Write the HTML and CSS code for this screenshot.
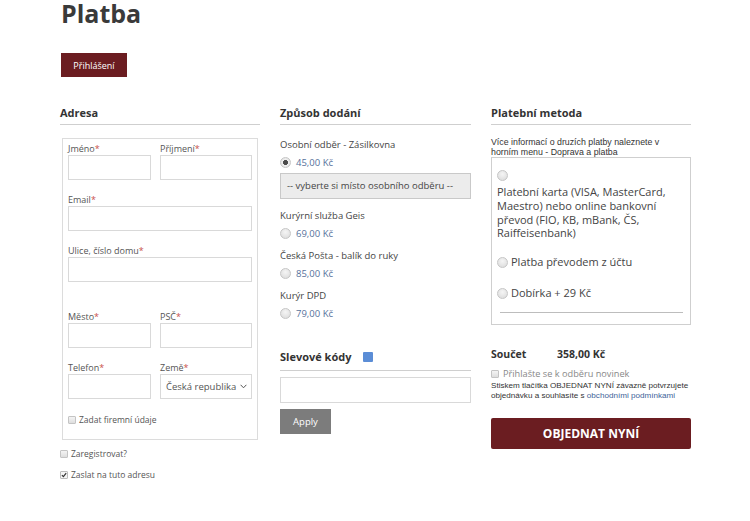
FILE: index.html
```html
<!DOCTYPE html>
<html lang="cs">
<head>
<meta charset="utf-8">
<title>Platba</title>
<link rel="stylesheet" href="styles.css">
</head>
<body>
<div class="page">
  <h1 class="title">Platba</h1>
  <button class="login-btn" type="button">Přihlášení</button>

  <div class="columns">
    <section class="col">
      <h2 class="col-heading">Adresa</h2>
      <div class="address-box">
        <div class="row-split">
          <div class="field field-left"><label class="lbl">Jméno<span class="req">*</span></label><input class="txt" type="text"></div>
          <div class="field field-right"><label class="lbl">Příjmení<span class="req">*</span></label><input class="txt" type="text"></div>
        </div>
        <div class="field"><label class="lbl">Email<span class="req">*</span></label><input class="txt" type="text"></div>
        <div class="field"><label class="lbl">Ulice, číslo domu<span class="req">*</span></label><input class="txt" type="text"></div>
        <div class="row-split row-gap">
          <div class="field field-left"><label class="lbl">Město<span class="req">*</span></label><input class="txt" type="text"></div>
          <div class="field field-right"><label class="lbl">PSČ<span class="req">*</span></label><input class="txt" type="text"></div>
        </div>
        <div class="row-split">
          <div class="field field-left"><label class="lbl">Telefon<span class="req">*</span></label><input class="txt" type="text"></div>
          <div class="field field-right"><label class="lbl">Země<span class="req">*</span></label>
            <div class="country">Česká republika
              <svg class="chev" width="7" height="5" viewBox="0 0 7 5"><path d="M0.6 0.8 L3.5 3.8 L6.4 0.8" fill="none" stroke="#555" stroke-width="1"/></svg>
            </div>
          </div>
        </div>
        <div class="check-row check-in"><span class="cbox"></span>Zadat firemní údaje</div>
      </div>
      <div class="check-row check-out"><span class="cbox"></span>Zaregistrovat?</div>
      <div class="check-row check-out"><span class="cbox cbox-on"><svg width="8" height="8" viewBox="0 0 8 8"><path d="M1.2 4.2 L3.2 6.2 L6.9 1.6" fill="none" stroke="#333" stroke-width="1.6"/></svg></span>Zaslat na tuto adresu</div>
    </section>

    <section class="col">
      <h2 class="col-heading">Způsob dodání</h2>
      <div class="ship-group ship-first">
        <div class="ship-name">Osobní odběr - Zásilkovna</div>
        <div class="ship-price"><span class="radio radio-on"></span>45,00 Kč</div>
        <div class="pickup">-- vyberte si místo osobního odběru --</div>
      </div>
      <div class="ship-group">
        <div class="ship-name">Kurýrní služba Geis</div>
        <div class="ship-price"><span class="radio"></span>69,00 Kč</div>
      </div>
      <div class="ship-group">
        <div class="ship-name">Česká Pošta - balík do ruky</div>
        <div class="ship-price"><span class="radio"></span>85,00 Kč</div>
      </div>
      <div class="ship-group">
        <div class="ship-name">Kurýr DPD</div>
        <div class="ship-price"><span class="radio"></span>79,00 Kč</div>
      </div>

      <h2 class="col-heading coupon-heading">Slevové kódy <span class="info-sq"></span></h2>
      <input class="txt coupon-input" type="text">
      <button class="apply-btn" type="button">Apply</button>
    </section>

    <section class="col">
      <h2 class="col-heading">Platební metoda</h2>
      <p class="pay-info">Více informací o druzích platby naleznete v horním menu - Doprava a platba</p>
      <div class="pay-box">
        <div class="pay-opt pay-card">
          <span class="radio radio-block"></span>
          <div class="pay-text">Platební karta (VISA, MasterCard, Maestro) nebo online bankovní převod (FIO, KB, mBank, ČS, Raiffeisenbank)</div>
        </div>
        <div class="pay-opt pay-line"><span class="radio"></span>Platba převodem z účtu</div>
        <div class="pay-opt pay-line"><span class="radio"></span>Dobírka + 29 Kč</div>
        <div class="pay-rule"></div>
      </div>
      <div class="total"><span class="total-label">Součet</span><span class="total-val">358,00 Kč</span></div>
      <div class="check-row news"><span class="cbox"></span>Přihlašte se k odběru novinek</div>
      <p class="terms">Stiskem tlačítka OBJEDNAT NYNÍ závazně potvrzujete objednávku a souhlasíte s <a class="terms-link" href="#">obchodními podmínkami</a></p>
      <button class="order-btn" type="button">OBJEDNAT NYNÍ</button>
    </section>
  </div>
</div>
</body>
</html>
```

FILE: styles.css
```css
* { box-sizing: border-box; }

body {
  margin: 0;
  background: #fff;
  font-family: "Open Sans", "Liberation Sans", sans-serif;
  color: #444;
}

.page {
  padding-left: 61px;
  width: 700px;
}

.title {
  margin: 0;
  font-size: 25px;
  line-height: 26px;
  font-weight: 700;
  color: #3a3a3a;
}

.login-btn {
  display: block;
  margin-top: 27px;
  width: 66px;
  height: 24px;
  border: 0;
  padding: 0;
  background: #6b1d21;
  color: #fff;
  font-family: "Open Sans", sans-serif;
  font-size: 9px;
}

.columns {
  display: grid;
  grid-template-columns: 200px 191px 200px;
  column-gap: 20px;
  margin-top: 29px;
  margin-left: -1px;
}

.col-heading {
  margin: 0;
  font-size: 11px;
  line-height: 14px;
  font-weight: 700;
  color: #333;
  padding-bottom: 4px;
  border-bottom: 1px solid #cfcfcf;
}

/* address */
.address-box {
  margin: 13px 2px 0 2px;
  border: 1px solid #dcdcdc;
  padding: 3px 5px 12px 5px;
}

.row-split {
  display: flex;
  justify-content: space-between;
}

.row-gap { margin-top: 28px; }

.field { margin-bottom: 13px; }
.field-left { width: 45%; }
.field-right { width: 50%; }

.lbl {
  display: block;
  font-size: 9px;
  line-height: 13px;
  color: #555;
}

.req { color: #c9504a; }

.txt {
  display: block;
  width: 100%;
  height: 25px;
  border: 1px solid #d9d9d9;
  background: #fff;
  margin: 0;
  padding: 0 4px;
}

.country {
  display: flex;
  align-items: center;
  justify-content: space-between;
  height: 25px;
  border: 1px solid #d9d9d9;
  padding: 0 4px 0 5px;
  font-size: 9.5px;
  color: #555;
}

.check-row {
  display: flex;
  align-items: center;
  font-size: 8.5px;
  line-height: 14px;
  color: #555;
}

.check-in { margin-top: 1px; }
.check-out { margin-top: 7px; }

.cbox {
  display: inline-flex;
  align-items: center;
  justify-content: center;
  width: 8px;
  height: 8px;
  border: 1px solid #c4c4c4;
  border-radius: 1px;
  background: linear-gradient(#f4f4f4, #dedede);
  margin-right: 3px;
}

.cbox-on { background: #f4f4f4; border-color: #bbb; }

/* shipping */
.ship-group { margin-top: 5px; }
.ship-first { margin-top: 13px; }

.ship-name {
  font-size: 9.5px;
  line-height: 14px;
  color: #444;
}

.ship-price {
  display: flex;
  align-items: center;
  height: 21px;
  font-size: 9.5px;
  color: #56719b;
}

.radio {
  display: inline-block;
  width: 11px;
  height: 11px;
  border-radius: 50%;
  border: 1px solid #c6c6c6;
  background: radial-gradient(circle at 50% 35%, #f5f5f5, #d9d9d9);
  margin-right: 5px;
  flex: none;
}

.radio-block { display: block; }

.radio-on {
  background: radial-gradient(circle, #4a4a4a 0, #4a4a4a 2.2px, #f0f0f0 2.8px, #dadada 100%);
}

.pickup {
  margin-top: 0;
  margin-bottom: 10px;
  height: 26px;
  border: 1px solid #c9c9c9;
  background: #ececec;
  font-size: 9.5px;
  line-height: 24px;
  padding-left: 6px;
  color: #444;
}

.coupon-heading {
  margin-top: 26px;
  padding-bottom: 6px;
  display: flex;
  align-items: center;
}

.info-sq {
  display: inline-block;
  width: 10px;
  height: 10px;
  margin-left: 12px;
  border-radius: 1px;
  background: #5b8dd6;
}

.coupon-input {
  margin-top: 6px;
  height: 26px;
}

.apply-btn {
  display: block;
  margin-top: 6px;
  width: 51px;
  height: 25px;
  border: 0;
  background: #7c7c7c;
  color: #fff;
  font-family: "Open Sans", sans-serif;
  font-size: 9.5px;
}

/* payment */
.pay-info {
  margin: 12px 0 0 0;
  max-width: 186px;
  font-family: "Liberation Sans", Arial, sans-serif;
  font-size: 8.8px;
  line-height: 10px;
  color: #333;
}

.pay-box {
  border: 1px solid #cfcfcf;
  padding: 12px 5px 11px 5px;
}

.pay-text {
  margin-top: 4px;
  font-size: 11px;
  line-height: 13.8px;
  color: #444;
}

.pay-line {
  display: flex;
  align-items: center;
  font-size: 11px;
  line-height: 14px;
  color: #444;
}

.pay-line .radio { margin-right: 3px; }

.pay-card { margin-bottom: 15px; }
.pay-line + .pay-line { margin-top: 17px; }

.pay-rule {
  margin: 12px 2px 0 3px;
  border-top: 1px solid #bdbdbd;
}

.total {
  margin-top: 22px;
  display: flex;
  font-size: 10.5px;
  line-height: 14px;
  font-weight: 700;
  color: #333;
}

.total-label { width: 66px; }

.news {
  margin-top: 6px;
  font-size: 9.2px;
  color: #888;
}

.news .cbox { margin-right: 4px; }

.terms {
  margin: 0;
  font-family: "Liberation Sans", Arial, sans-serif;
  font-size: 8.1px;
  line-height: 10px;
  color: #333;
}

.terms-link {
  color: #3e5f98;
  text-decoration: none;
}

.order-btn {
  display: block;
  margin-top: 17px;
  width: 100%;
  height: 31px;
  border: 0;
  border-radius: 2px;
  background: #6b1d21;
  color: #fff;
  font-family: "Open Sans", sans-serif;
  font-weight: 700;
  font-size: 12px;
}
```
